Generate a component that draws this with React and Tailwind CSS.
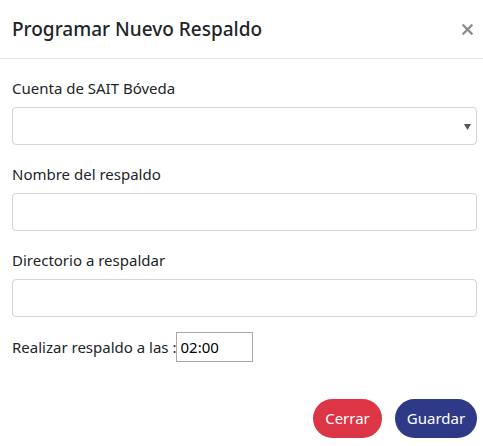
import React from 'react';

export default function App() {
    return (
        <div className="w-[483px] h-[446px] bg-white text-[#212529] overflow-hidden font-['Noto_Sans',sans-serif]">
            <div className="h-[59px] border-b border-[#dee2e6] pl-3 pr-[6px] flex items-center justify-between">
                <h5 className="text-[19px] font-medium leading-[30px] text-[#212529]">Programar Nuevo Respaldo</h5>
                <button className="w-5 h-5 flex items-center justify-center text-[#8c8c8c]">
                    <svg width="11" height="11" viewBox="0 0 12 12">
                        <path d="M1.5 1.5 L10.5 10.5 M10.5 1.5 L1.5 10.5" stroke="currentColor" strokeWidth="2.4" strokeLinecap="square" />
                    </svg>
                </button>
            </div>

            <div className="pl-3 pr-[6px] pt-[17px]">
                <div className="mb-4">
                    <label className="block text-[15px] leading-6 mb-[7px]">Cuenta de SAIT Bóveda</label>
                    <div className="relative h-[38px] border border-[#ced4da] rounded-[4px]">
                        <svg className="absolute right-[5px] top-[16px]" width="7" height="6" viewBox="0 0 7 6">
                            <path d="M0 0 H7 L3.5 6 Z" fill="#555" />
                        </svg>
                    </div>
                </div>
                <div className="mb-4">
                    <label className="block text-[15px] leading-6 mb-[7px] pt-px">Nombre del respaldo</label>
                    <input className="block w-full h-[38px] border border-[#ced4da] rounded-[4px] outline-none" />
                </div>
                <div className="mb-[15px]">
                    <label className="block text-[15px] leading-6 mb-[7px] pt-px">Directorio a respaldar</label>
                    <input className="block w-full h-[38px] border border-[#ced4da] rounded-[4px] outline-none" />
                </div>
                <div className="flex items-center h-[30px]">
                    <span className="text-[15px] leading-6 whitespace-pre">Realizar respaldo a las :</span>
                    <div className="w-[77px] h-[30px] border border-[#a9a9a9] flex items-center pl-[3px] text-[15px] text-black">02:00</div>
                </div>
            </div>

            <div className="flex justify-end gap-[13px] pr-[6px] pt-[37px]">
                <button className="h-[39px] w-[69px] rounded-full bg-[#dc3545] text-white text-[15px]">Cerrar</button>
                <button className="h-[39px] w-[82px] rounded-full bg-[#2e3a87] text-white text-[15px]">Guardar</button>
            </div>
        </div>
    );
}
